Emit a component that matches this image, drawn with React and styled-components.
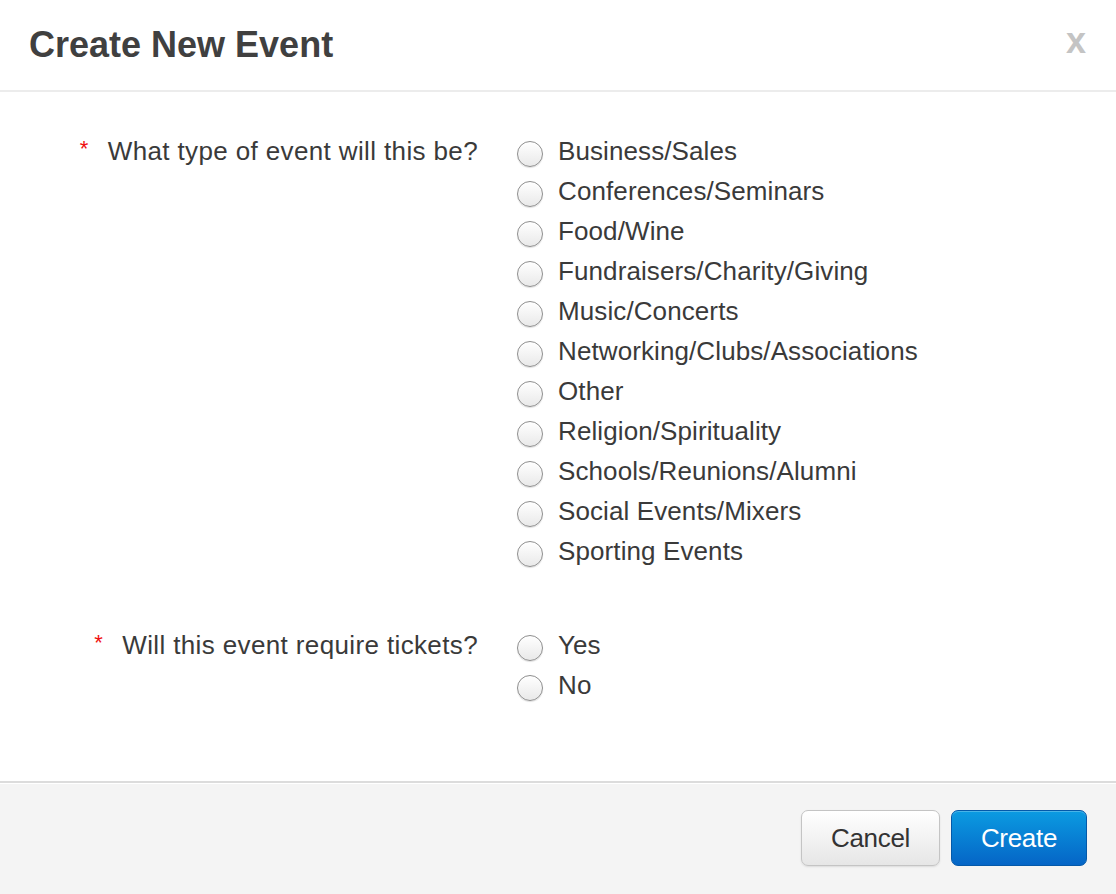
import styled, { createGlobalStyle } from "styled-components";

const GlobalStyle = createGlobalStyle`
  html, body {
    margin: 0;
    padding: 0;
    background: #fff;
  }
  body {
    font-family: "Liberation Sans", Arial, Helvetica, sans-serif;
    color: #333;
  }
`;

const eventTypes = [
  "Business/Sales",
  "Conferences/Seminars",
  "Food/Wine",
  "Fundraisers/Charity/Giving",
  "Music/Concerts",
  "Networking/Clubs/Associations",
  "Other",
  "Religion/Spirituality",
  "Schools/Reunions/Alumni",
  "Social Events/Mixers",
  "Sporting Events",
];

function Question({ label, name, options }) {
  return (
    <QuestionRow>
      <Label>
        <Star>*</Star>
        {label}
      </Label>
      <Options>
        {options.map((opt) => (
          <Option key={opt}>
            <input type="radio" name={name} value={opt} />
            <span>{opt}</span>
          </Option>
        ))}
      </Options>
    </QuestionRow>
  );
}

function App() {
  return (
    <Modal>
      <GlobalStyle />
      <Header>
        <Title>Create New Event</Title>
        <Close type="button">x</Close>
      </Header>
      <Body>
        <Question label="What type of event will this be?" name="type" options={eventTypes} />
        <Question label="Will this event require tickets?" name="tickets" options={["Yes", "No"]} />
      </Body>
      <Footer>
        <Button type="button" width="139px">
          Cancel
        </Button>
        <Button type="button" width="136px" primary>
          Create
        </Button>
      </Footer>
    </Modal>
  );
}

const Modal = styled.div`
  width: 1116px;
  height: 894px;
  display: flex;
  flex-direction: column;
  background: #fff;
  overflow: hidden;
`;

const Header = styled.div`
  display: flex;
  justify-content: space-between;
  align-items: flex-start;
  padding: 27px 29px 27px 29px;
  border-bottom: 2px solid #ececec;
`;

const Title = styled.h1`
  margin: 0;
  font-size: 36px;
  line-height: 36px;
  font-weight: bold;
  color: #404040;
`;

const Close = styled.button`
  border: none;
  background: none;
  padding: 0;
  margin-top: -4px;
  margin-right: 1px;
  font-family: inherit;
  font-size: 36px;
  line-height: 36px;
  font-weight: bold;
  color: #c4c4c4;
  cursor: pointer;
`;

const Body = styled.div`
  flex: 1;
  padding-top: 39px;
  display: flex;
  flex-direction: column;
  gap: 54px;
`;

const QuestionRow = styled.div`
  display: grid;
  grid-template-columns: 478px 1fr;
  column-gap: 39px;
`;

const Label = styled.div`
  text-align: right;
  font-size: 26px;
  line-height: 40px;
  letter-spacing: 0.37px;
  color: #3a3a3a;
`;

const Star = styled.span`
  color: #f01010;
  font-size: 22px;
  margin-right: 19px;
  position: relative;
  top: -4px;
`;

const Options = styled.div`
  display: flex;
  flex-direction: column;
`;

const Option = styled.label`
  display: flex;
  align-items: center;
  height: 40px;
  font-size: 26px;
  letter-spacing: 0.1px;
  color: #3a3a3a;

  input {
    appearance: none;
    width: 26px;
    height: 26px;
    margin: 6px 15px 0 0;
    border-radius: 50%;
    border: 1px solid #8e8e8e;
    background: linear-gradient(#ffffff, #e9e9e9);
    box-shadow: inset 0 1px 1px #fff, 0 1px 1px rgba(0, 0, 0, 0.12);
    flex-shrink: 0;
  }
`;

const Footer = styled.div`
  height: 84px;
  padding: 27px 29px 0;
  display: flex;
  justify-content: flex-end;
  align-items: flex-start;
  gap: 11px;
  background: #f4f4f4;
  border-top: 2px solid #dcdcdc;
  box-shadow: inset 0 1px 0 #fff;
`;

const Button = styled.button`
  width: ${(p) => p.width};
  height: 56px;
  padding: 0;
  border-radius: 7px;
  font-family: inherit;
  font-size: 26px;
  letter-spacing: -0.3px;
  cursor: pointer;
  color: ${(p) => (p.primary ? "#fff" : "#333")};
  border: 1px solid ${(p) => (p.primary ? "#0459a9" : "#c4c4c4")};
  background: ${(p) =>
    p.primary
      ? "linear-gradient(#0b9be1, #0565c6)"
      : "linear-gradient(#ffffff, #e6e6e6)"};
  box-shadow: ${(p) =>
    p.primary
      ? "inset 0 1px 0 rgba(255,255,255,0.25)"
      : "0 1px 2px rgba(0,0,0,0.1)"};
`;

export default App;
